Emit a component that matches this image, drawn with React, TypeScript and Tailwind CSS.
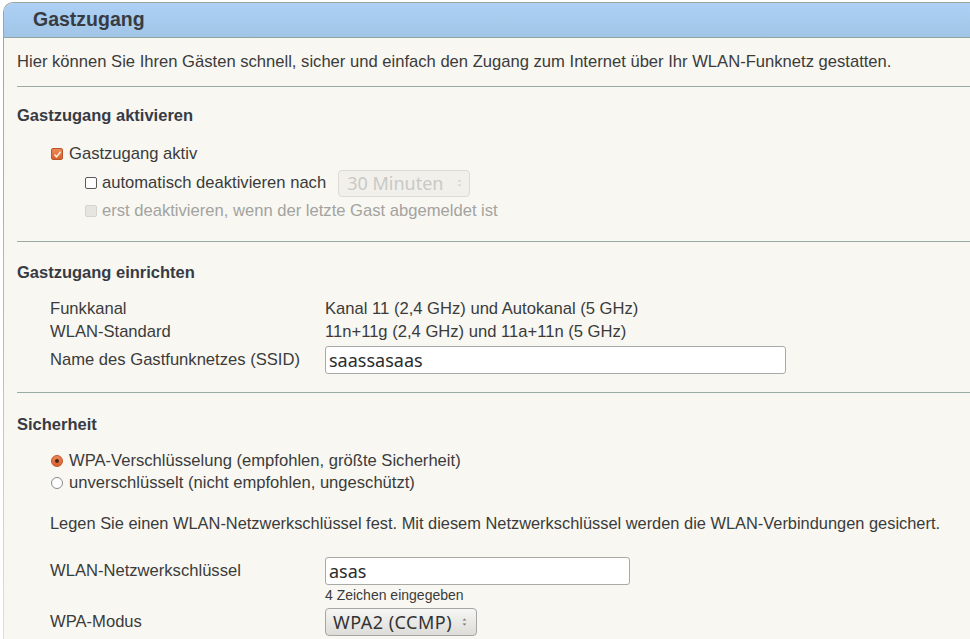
import React from "react";

const sans = { fontFamily: '"Liberation Sans", Arial, sans-serif' };
const ui = { fontFamily: '"Noto Sans", "Open Sans", sans-serif' };

function Check({ state }: { state: "on" | "off" | "disabled" }) {
  if (state === "on") {
    return (
      <span className="inline-flex h-[12px] w-[12px] items-center justify-center rounded-[2px] border border-[#b8552a] bg-gradient-to-b from-[#ee8a55] to-[#d9612c]">
        <svg width="9" height="9" viewBox="0 0 9 9">
          <path d="M1.5 4.6 L3.6 6.8 L7.6 1.8" fill="none" stroke="#fde9dc" strokeWidth="1.6" />
        </svg>
      </span>
    );
  }
  if (state === "disabled") {
    return <span className="inline-block h-[12px] w-[12px] rounded-[2px] border border-[#d4d4d0] bg-[#e6e5e0]" />;
  }
  return <span className="inline-block h-[12px] w-[12px] rounded-[2px] border border-[#5a5a5a] bg-white" />;
}

function Radio({ on }: { on?: boolean }) {
  if (on) {
    return (
      <span className="inline-flex h-[12px] w-[12px] items-center justify-center rounded-full border border-[#c0562a] bg-gradient-to-b from-[#ef8757] to-[#d9612c]">
        <span className="h-[4px] w-[4px] rounded-full bg-[#4a2a1a]" />
      </span>
    );
  }
  return <span className="inline-block h-[12px] w-[12px] rounded-full border border-[#8a8a8a] bg-white" />;
}

function Spinner({ color }: { color: string }) {
  return (
    <svg width="7" height="12" viewBox="0 0 7 12" className="ml-auto">
      <path d="M1.5 4.5 L3.5 2.5 L5.5 4.5 Z" fill={color} />
      <path d="M1.5 7.5 L3.5 9.5 L5.5 7.5 Z" fill={color} />
    </svg>
  );
}

function SectionHead({ children, h }: { children: React.ReactNode; h: string }) {
  return (
    <div className={`flex items-center font-bold text-[16.5px] text-[#363b44] ${h}`}>{children}</div>
  );
}

export default function App() {
  return (
    <div className="h-[639px] w-[970px] overflow-hidden bg-white text-[16.6px] text-[#3b3b3b]" style={sans}>
      <div className="ml-[3px] mt-[2px] rounded-tl-[10px] bg-gradient-to-b from-[#9aa69c] via-[#b6bca6] to-[#e8e3b0] pl-[1px] pt-[1px]">
        <div className="rounded-tl-[9px] bg-[#f8f7f2]">
          {/* title bar */}
          <div className="flex h-[35px] items-center rounded-tl-[9px] border-b border-[#8fa69e] bg-gradient-to-b from-[#acd1f5] to-[#a1c5e6] pl-[29px]">
            <span className="text-[19.5px] font-bold text-[#383c42]">Gastzugang</span>
          </div>

          <div className="pl-[13px]">
            <div className="flex h-[48px] items-center whitespace-nowrap">
              Hier können Sie Ihren Gästen schnell, sicher und einfach den Zugang zum Internet über Ihr WLAN-Funknetz gestatten.
            </div>

            {/* activation */}
            <div className="border-t border-[#9aaaa4]">
              <SectionHead h="h-[56px]">Gastzugang aktivieren</SectionHead>
              <div className="flex h-[22px] items-center pl-[34px]">
                <Check state="on" />
                <span className="ml-[6px]">Gastzugang aktiv</span>
              </div>
              <div className="flex h-[36px] items-center pl-[68px]">
                <Check state="off" />
                <span className="ml-[5px]">automatisch deaktivieren nach</span>
                <div
                  className="ml-[12px] flex h-[27px] w-[132px] items-center rounded-[4px] border border-[#dcdbd6] bg-[#f1f0eb] pl-[8px] pr-[6px] text-[18px] text-[#c9c9c6]"
                  style={ui}
                >
                  30 Minuten
                  <Spinner color="#cfcfcb" />
                </div>
              </div>
              <div className="flex h-[20px] items-center pl-[68px] text-[#a3a3a0]">
                <Check state="disabled" />
                <span className="ml-[5px]">erst deaktivieren, wenn der letzte Gast abgemeldet ist</span>
              </div>
              <div className="h-[20px]" />
            </div>

            {/* setup */}
            <div className="border-t border-[#9aaaa4]">
              <SectionHead h="h-[56px] pt-[4px]">Gastzugang einrichten</SectionHead>
              <div className="flex h-[22px] items-center pl-[33px]">
                <span className="w-[275px]">Funkkanal</span>
                <span>Kanal 11 (2,4 GHz) und Autokanal (5 GHz)</span>
              </div>
              <div className="flex h-[24px] items-center pl-[33px]">
                <span className="w-[275px]">WLAN-Standard</span>
                <span>11n+11g (2,4 GHz) und 11a+11n (5 GHz)</span>
              </div>
              <div className="flex h-[32px] items-center pl-[33px]">
                <span className="w-[275px]">Name des Gastfunknetzes (SSID)</span>
                <div
                  className="flex h-[28px] w-[461px] items-center rounded-[3px] border border-[#a9a9a6] bg-white pl-[3px] text-[18px] text-[#2c2c2c]"
                  style={ui}
                >
                  saassasaas
                </div>
              </div>
              <div className="h-[16px]" />
            </div>

            {/* security */}
            <div className="border-t border-[#9aaaa4]">
              <SectionHead h="h-[58px] pt-[4px]">Sicherheit</SectionHead>
              <div className="flex h-[20px] items-center pl-[34px]">
                <Radio on />
                <span className="ml-[6px]">WPA-Verschlüsselung (empfohlen, größte Sicherheit)</span>
              </div>
              <div className="flex h-[24px] items-center pl-[34px]">
                <Radio />
                <span className="ml-[6px]">unverschlüsselt (nicht empfohlen, ungeschützt)</span>
              </div>
              <div className="flex h-[56px] items-center whitespace-nowrap pl-[33px] text-[16.4px]">
                Legen Sie einen WLAN-Netzwerkschlüssel fest. Mit diesem Netzwerkschlüssel werden die WLAN-Verbindungen gesichert.
              </div>
              <div className="mt-[4px] flex h-[32px] items-center pl-[33px]">
                <span className="w-[275px]">WLAN-Netzwerkschlüssel</span>
                <div
                  className="flex h-[28px] w-[305px] items-center rounded-[3px] border border-[#a9a9a6] bg-white pl-[3px] text-[18px] text-[#2c2c2c]"
                  style={ui}
                >
                  asas
                </div>
              </div>
              <div className="flex h-[16px] items-center pl-[308px] text-[14px]">4 Zeichen eingegeben</div>
              <div className="flex h-[38px] items-center pl-[33px]">
                <span className="w-[275px]">WPA-Modus</span>
                <div
                  className="flex h-[28px] w-[152px] items-center rounded-[4px] border border-[#a6a6a2] bg-gradient-to-b from-[#f6f6f4] to-[#dddcd8] pl-[7px] pr-[8px] text-[18px] tracking-[0.5px] text-[#333]"
                  style={ui}
                >
                  WPA2 (CCMP)
                  <Spinner color="#777" />
                </div>
              </div>
            </div>
          </div>
        </div>
      </div>
    </div>
  );
}
